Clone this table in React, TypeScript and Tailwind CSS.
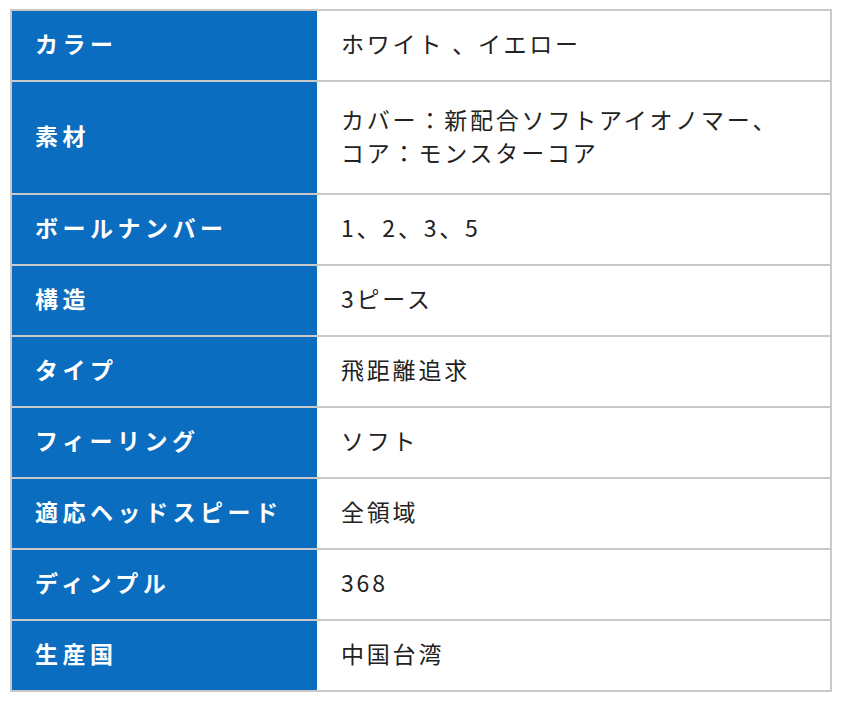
const rows: { label: string; value: string[] }[] = [
  { label: 'カラー', value: ['ホワイト 、イエロー'] },
  { label: '素材', value: ['カバー：新配合ソフトアイオノマー、', 'コア：モンスターコア'] },
  { label: 'ボールナンバー', value: ['1、2、3、5'] },
  { label: '構造', value: ['3ピース'] },
  { label: 'タイプ', value: ['飛距離追求'] },
  { label: 'フィーリング', value: ['ソフト'] },
  { label: '適応ヘッドスピード', value: ['全領域'] },
  { label: 'ディンプル', value: ['368'] },
  { label: '生産国', value: ['中国台湾'] },
]

export default function App() {
  return (
    <div
      className="min-h-[710px] bg-white pl-[10px] pt-[9px]"
      style={{ fontFamily: '"Noto Sans CJK JP", "Noto Sans", sans-serif' }}
    >
      <table className="w-[822px] border-collapse border-2 border-[#c9c9c9]">
        <tbody>
          {rows.map((row) => (
            <tr key={row.label} className={row.value.length > 1 ? 'h-[113px]' : 'h-[71px]'}>
              <th className="w-[306px] border-y-2 border-[#c9c9c9] bg-[#0a6dbf] pb-[4px] pl-[23px] text-left align-middle text-[23px] font-bold tracking-[4.5px] text-white">
                {row.label}
              </th>
              <td className="border-y-2 border-[#c9c9c9] pb-[4px] pl-[24px] align-middle text-[23px] leading-[33px] tracking-[2.8px] text-[#222]">
                {row.value.map((line) => (
                  <div key={line}>{line}</div>
                ))}
              </td>
            </tr>
          ))}
        </tbody>
      </table>
    </div>
  )
}
